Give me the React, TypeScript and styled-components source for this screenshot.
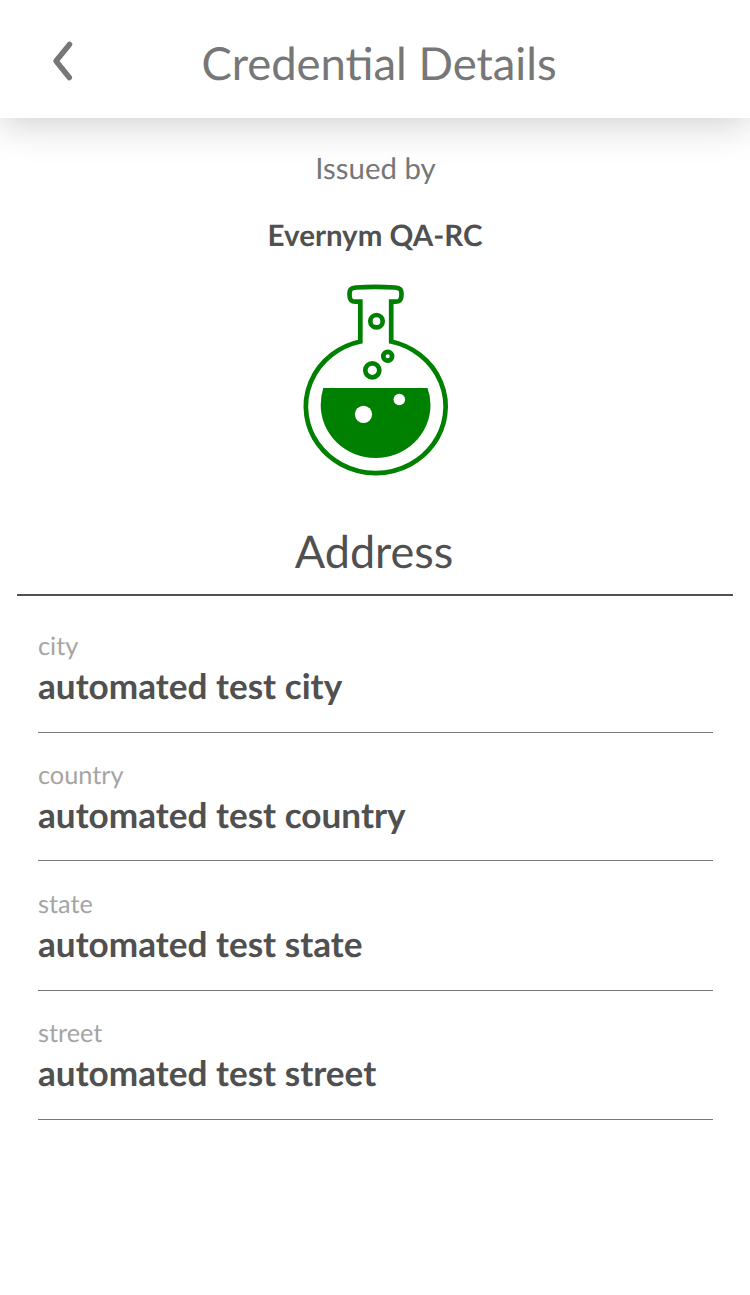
import React from "react";
import styled, { createGlobalStyle } from "styled-components";

const Global = createGlobalStyle`
  * { box-sizing: border-box; }
  body { margin: 0; background: #fff; font-family: Lato, sans-serif; text-rendering: geometricPrecision; }
`;
const Screen = styled.div`
  height: 1295px;
  background: #fff;
  overflow: hidden;
`;
const Header = styled.header`
  height: 118px;
  display: grid;
  grid-template-columns: 100px 1fr 100px;
  align-items: start;
  background: #fff;
  box-shadow: 0 4px 40px rgba(0, 0, 0, 0.21);
`;
const BackButton = styled.button`
  width: 40px;
  height: 50px;
  margin: 36px 0 0 43px;
  padding: 0;
  border: 0;
  background: none;
  svg { display: block; }
`;
const Title = styled.h1`
  margin: 35px 0 0 8px;
  font-size: 45.4px;
  line-height: 56px;
  font-weight: 400;
  color: #777;
  text-align: center;
  white-space: nowrap;
`;
const Issuer = styled.section`
  display: flex;
  flex-direction: column;
  align-items: center;
`;
const IssuedBy = styled.div`
  margin-top: 33px;
  padding-left: 1px;
  font-size: 29.4px;
  line-height: 36px;
  color: #777;
`;
const IssuerName = styled.div`
  margin: 31px 0 29px;
  font-size: 29.5px;
  line-height: 36px;
  font-weight: 700;
  color: #505050;
`;
const Heading = styled.h2`
  margin: 44px 17px 0;
  padding-right: 2px;
  height: 73px;
  border-bottom: 2px solid #505050;
  font-size: 45px;
  line-height: 56px;
  font-weight: 400;
  color: #505050;
  text-align: center;
`;
const Fields = styled.dl`
  display: grid;
  grid-template-rows: 129px 128px 130px 129px;
  margin: 8px 37px 0 38px;
`;
const Field = styled.div`
  display: flex;
  flex-direction: column;
  justify-content: flex-start;
  padding-top: 27px;
  border-bottom: 1px solid #777;
  &:nth-child(3) { padding-top: 28px; }
`;
const Label = styled.dt`
  font-size: 25.3px;
  line-height: 30px;
  color: #a5a5a5;
`;
const Value = styled.dd`
  margin: 4px 0 0;
  font-size: 35.15px;
  line-height: 42px;
  font-weight: 700;
  color: #505050;
`;

const attributes = [
  ["city", "automated test city"],
  ["country", "automated test country"],
  ["state", "automated test state"],
  ["street", "automated test street"],
];

const Flask = () => (
  <svg width="150" height="196" viewBox="300 283 150 196" fill="none" stroke="#008000" strokeWidth="4.700">
    <path d="M360.300 301.700V341.500A69.900 66.600 0 1 0 391.200 341.500V301.700H395.500C400.500 301.700 401.500 299 401.500 294.500C401.500 289 400 288 395 287.500Q375.500 286.200 356 287.500C351 288 349.500 289 349.500 294.500C349.500 299 350.500 301.700 355.500 301.700Z" />
    <path d="M323.300 388H427.500Q430.500 396 430.500 405A54.900 53 0 0 1 320.700 405Q320.700 396 323.300 388Z" fill="#008000" stroke="none" />
    <circle cx="376.500" cy="321.200" r="6.200" />
    <circle cx="387.700" cy="356.300" r="4.400" />
    <circle cx="372.300" cy="370.300" r="7" />
    <circle cx="363.500" cy="414.300" r="8.600" fill="#fff" stroke="none" />
    <circle cx="399.300" cy="399.500" r="5.800" fill="#fff" stroke="none" />
  </svg>
);

export default function App() {
  return (
    <Screen>
      <Global />
      <Header>
        <BackButton aria-label="Back">
          <svg width="40" height="50" viewBox="43 36 40 50" fill="none" stroke="#777" strokeWidth="5.500">
            <path d="M69.500 44.500L56 61L69.300 77.500" strokeLinecap="round" strokeLinejoin="round" />
          </svg>
        </BackButton>
        <Title>Credential Details</Title>
      </Header>
      <Issuer>
        <IssuedBy>Issued by</IssuedBy>
        <IssuerName>Evernym QA-RC</IssuerName>
        <Flask />
      </Issuer>
      <Heading>Address</Heading>
      <Fields>
        {attributes.map(([label, value]) => (
          <Field key={label}>
            <Label>{label}</Label>
            <Value>{value}</Value>
          </Field>
        ))}
      </Fields>
    </Screen>
  );
}
